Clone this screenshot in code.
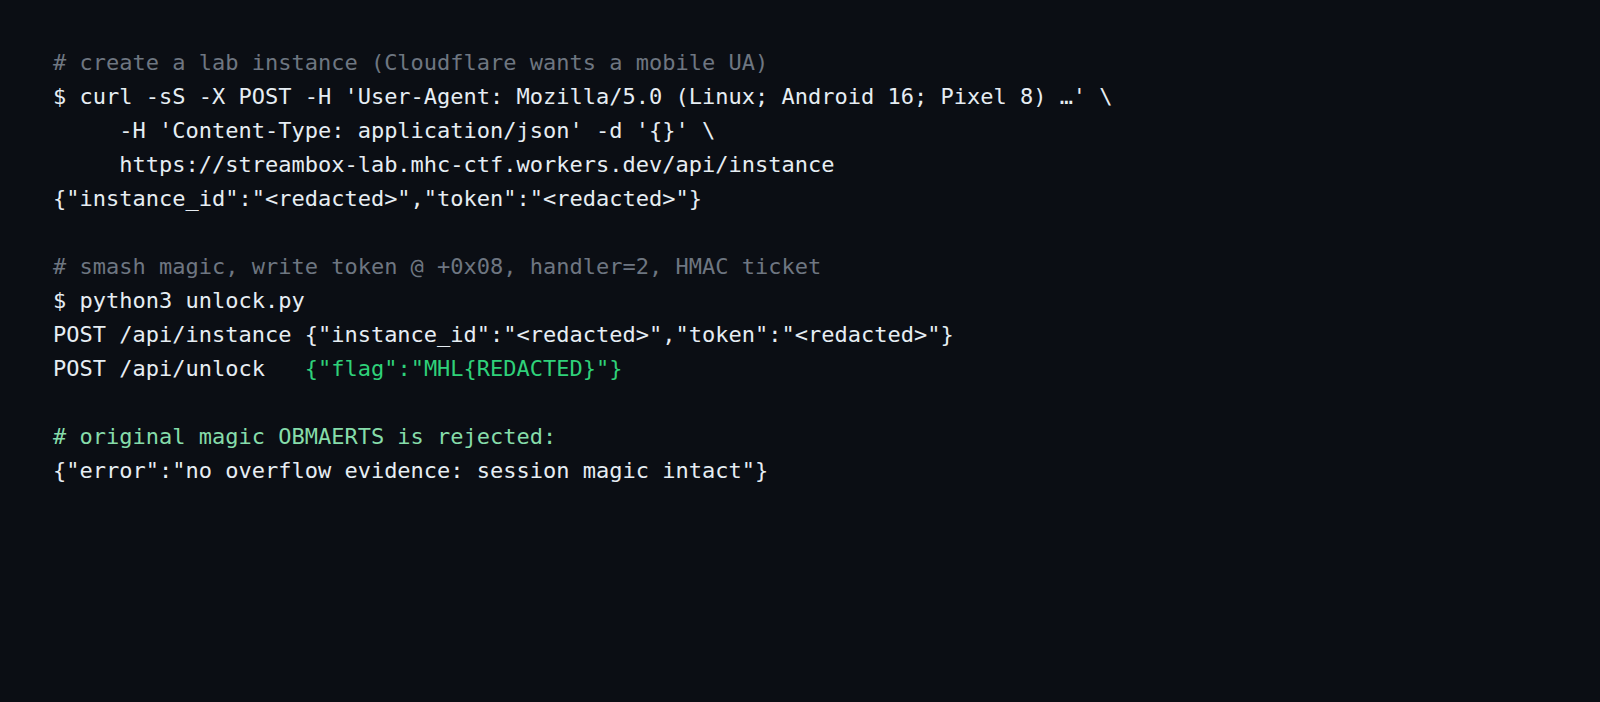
const lines = [
  { parts: [{ t: '# create a lab instance (Cloudflare wants a mobile UA)', c: 'text-[#6e7681]' }] },
  { parts: [{ t: "$ curl -sS -X POST -H 'User-Agent: Mozilla/5.0 (Linux; Android 16; Pixel 8) …' \\" }] },
  { parts: [{ t: "     -H 'Content-Type: application/json' -d '{}' \\" }] },
  { parts: [{ t: '     https://streambox-lab.mhc-ctf.workers.dev/api/instance' }] },
  { parts: [{ t: '{"instance_id":"<redacted>","token":"<redacted>"}' }] },
  { parts: [] },
  { parts: [{ t: '# smash magic, write token @ +0x08, handler=2, HMAC ticket', c: 'text-[#6e7681]' }] },
  { parts: [{ t: '$ python3 unlock.py' }] },
  { parts: [{ t: 'POST /api/instance {"instance_id":"<redacted>","token":"<redacted>"}' }] },
  {
    parts: [
      { t: 'POST /api/unlock   ' },
      { t: '{"flag":"MHL{REDACTED}"}', c: 'text-[#2fd17a]' },
    ],
  },
  { parts: [] },
  { parts: [{ t: '# original magic OBMAERTS is rejected:', c: 'text-[#86dcaa]' }] },
  { parts: [{ t: '{"error":"no overflow evidence: session magic intact"}' }] },
];

export default function App() {
  return (
    <div className="min-h-screen w-full bg-[#0b0e14] pl-[53px] pt-[46px] font-['DejaVu_Sans_Mono',monospace] text-[22px] leading-[34px] text-[#e6edf3]">
      {lines.map((line, i) => (
        <div key={i} className="h-[34px] whitespace-pre">
          {line.parts.map((p, j) => (
            <span key={j} className={p.c}>
              {p.t}
            </span>
          ))}
        </div>
      ))}
    </div>
  );
}
